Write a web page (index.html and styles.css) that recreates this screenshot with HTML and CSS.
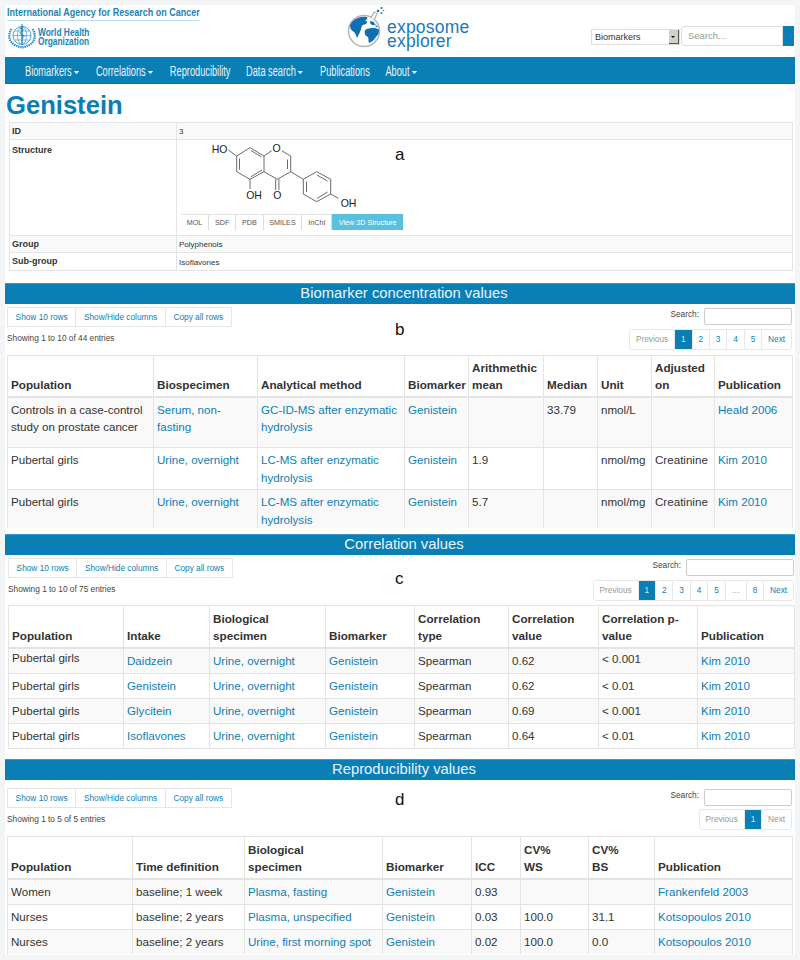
FILE: index.html
```html
<!DOCTYPE html>
<html lang="en">
<head>
<meta charset="utf-8">
<title>Genistein - Exposome Explorer</title>
<link rel="stylesheet" href="styles.css">
</head>
<body>
<div class="page">
  <header class="top">
    <div class="brand-left">
      <div class="iarc"><span>International Agency for Research on Cancer</span></div>
      <div class="who">
        <svg class="who-mark" viewBox="0 0 30 26" aria-hidden="true">
          <g fill="none" stroke="#2a8cc4">
            <circle cx="15" cy="12.5" r="9" stroke-width=".8"/>
            <ellipse cx="15" cy="12.5" rx="4.5" ry="9" stroke-width=".6"/>
            <path d="M6 12.5h18M7.5 8h15M7.5 17h15M15 3.5v18" stroke-width=".6"/>
            <path d="M15 1v20M13 6c3-1.500 4 .8 2 2s-3 2.500 0 3.500 2.500 2.500 0 3.500" stroke="#0f74ad" stroke-width="1"/>
            <path d="M4.500 6C1 11 1.500 18 7 21.500c3 2 6 2.500 8 3 2-.5 5-1 8-3 5.500-3.500 6-10.500 2.500-15.500" stroke-width="2.200" stroke-dasharray="1.500 .7"/>
          </g>
        </svg>
        <div class="who-name"><span>World Health<br>Organization</span></div>
      </div>
    </div>
    <div class="brand-mid">
      <svg class="globe" viewBox="0 0 40 42" aria-hidden="true">
        <circle cx="18" cy="25" r="15.500" fill="#fff" stroke="#b4b4b4" stroke-width="1.500"/>
        <path d="M25 12l3-6 3 1.500-2.500 6" fill="#fff" stroke="#b4b4b4" stroke-width="1.200"/>
        <path d="M8 14c4-3 9-4 13-3 1 2-1 3-2 4 2 0 3 1 1 3-2 1-3 0-4 2s-1 4-2 6-2 4-3 6c-1-2-1-4-3-6-2-1-4-3-4-6 0-2 2-4 4-6z" fill="#0f6fb0"/>
        <path d="M19 24c3-2 7-2 10-2 2 1 3 0 4 2 0 3-1 5-3 7-2 3-4 5-7 6-1-2 0-4-1-6-2-1-4-2-3-7z" fill="#0f6fb0"/>
        <path d="M24 15l4 1 1 3-3 0-2-2zM29 18l3 3-2 0z" fill="#0f6fb0"/>
        <circle cx="32" cy="5" r="1.300" fill="#1a7ab5"/><circle cx="35.500" cy="2" r="1.100" fill="#1a7ab5"/><circle cx="35.500" cy="7" r="1" fill="#1a7ab5"/><circle cx="37.500" cy="4.500" r=".8" fill="#1a7ab5"/>
      </svg>
      <div class="logo-word">exposome<br>explorer</div>
    </div>
    <div class="brand-right">
      <div class="select-box"><span>Biomarkers</span><i class="select-arrow"></i></div>
      <div class="search-box"><span>Search...</span></div>
      <div class="search-btn"></div>
    </div>
  </header>

  <nav class="nav">
    <div class="nav-inner">
      <a>Biomarkers<i class="caret"></i></a>
      <a>Correlations<i class="caret"></i></a>
      <a>Reproducibility</a>
      <a>Data search<i class="caret"></i></a>
      <a>Publications</a>
      <a>About<i class="caret"></i></a>
    </div>
  </nav>

  <h1 class="title">Genistein</h1>

  <section class="info-wrap">
    <span class="tag tag-a">a</span>
    <table class="info">
      <tr class="r-id"><th>ID</th><td>3</td></tr>
      <tr class="r-struct"><th>Structure</th><td>
        <svg class="molecule" viewBox="0 0 250 72" aria-hidden="true">
          <g fill="none" stroke="#444" stroke-width=".8">
            <path d="M80 7.700L66.700 16V31.700L80 39.300 94 31.700V16ZM69.500 18.500V29.500M81 36.700L92 30M81 10.500L91.500 17"/>
            <path d="M58.300 10L66.700 16M80 39.300V49M94 16L101.700 10.700M111.700 10.700L120.700 16V31.700L107.300 39.300 94 31.700M117.500 19.500V29M105.700 39.300V50M108.900 39.300V50"/>
            <path d="M120.700 31.700L133.300 39.300 146.700 31.700 160.700 39.300V54L146.700 61.700 133.300 54V39.300M136.500 41.500V52M147 35L157.500 41M147 58.500L157.500 52M160.700 54L168.300 58.300"/>
          </g>
          <g class="atoms">
            <text x="41.700" y="12.500">HO</text><text x="106.700" y="12" text-anchor="middle">O</text><text x="84" y="59" text-anchor="middle">OH</text><text x="107.300" y="59" text-anchor="middle">O</text><text x="170.700" y="66.500">OH</text>
          </g>
        </svg>
        <div class="tabs"><span>MOL</span><span>SDF</span><span>PDB</span><span>SMILES</span><span>InChI</span><span class="tab-on">View 3D Structure</span></div>
      </td></tr>
      <tr class="r-group"><th>Group</th><td>Polyphenols</td></tr>
      <tr class="r-sub"><th>Sub-group</th><td>Isoflavones</td></tr>
    </table>
  </section>

  <section class="sec sec-b">
    <h2 class="bar">Biomarker concentration values</h2>
    <span class="tag tag-b">b</span>
    <div class="tools">
      <div>
        <div class="btns"><a>Show 10 rows</a><a>Show/Hide columns</a><a>Copy all rows</a></div>
        <div class="count">Showing 1 to 10 of 44 entries</div>
      </div>
      <div class="tools-right">
        <div class="search"><label>Search:</label><span class="search-input"></span></div>
        <div class="pager"><a class="off">Previous</a><a class="on">1</a><a>2</a><a>3</a><a>4</a><a>5</a><a>Next</a></div>
      </div>
    </div>
    <div class="clip">
      <table class="data">
        <colgroup><col class="w146"><col class="w104"><col class="w147"><col class="w64"><col class="w75"><col class="w54"><col class="w54"><col class="w63"><col class="w78"></colgroup>
        <thead><tr class="h41"><th>Population</th><th>Biospecimen</th><th>Analytical method</th><th>Biomarker</th><th>Arithmethic mean</th><th>Median</th><th>Unit</th><th>Adjusted on</th><th>Publication</th></tr></thead>
        <tbody>
          <tr class="h51 odd"><td>Controls in a case-control study on prostate cancer</td><td><a>Serum, non-fasting</a></td><td><a>GC-ID-MS after enzymatic hydrolysis</a></td><td><a>Genistein</a></td><td></td><td>33.79</td><td>nmol/L</td><td></td><td><a>Heald 2006</a></td></tr>
          <tr class="h42"><td>Pubertal girls</td><td><a>Urine, overnight</a></td><td><a>LC-MS after enzymatic hydrolysis</a></td><td><a>Genistein</a></td><td>1.9</td><td></td><td>nmol/mg</td><td>Creatinine</td><td><a>Kim 2010</a></td></tr>
          <tr class="h42 odd"><td>Pubertal girls</td><td><a>Urine, overnight</a></td><td><a>LC-MS after enzymatic hydrolysis</a></td><td><a>Genistein</a></td><td>5.7</td><td></td><td>nmol/mg</td><td>Creatinine</td><td><a>Kim 2010</a></td></tr>
        </tbody>
      </table>
    </div>
  </section>

  <section class="sec sec-c">
    <h2 class="bar">Correlation values</h2>
    <span class="tag tag-c">c</span>
    <div class="tools">
      <div>
        <div class="btns"><a>Show 10 rows</a><a>Show/Hide columns</a><a>Copy all rows</a></div>
        <div class="count">Showing 1 to 10 of 75 entries</div>
      </div>
      <div class="tools-right">
        <div class="search"><label>Search:</label><span class="search-input"></span></div>
        <div class="pager"><a class="off">Previous</a><a class="on">1</a><a>2</a><a>3</a><a>4</a><a>5</a><a class="off">…</a><a>8</a><a>Next</a></div>
      </div>
    </div>
    <div class="clip">
      <table class="data">
        <colgroup><col class="w115"><col class="w86"><col class="w116"><col class="w89"><col class="w94"><col class="w90"><col class="w99"><col class="w97"></colgroup>
        <thead><tr class="h42"><th>Population</th><th>Intake</th><th>Biological specimen</th><th>Biomarker</th><th>Correlation type</th><th>Correlation value</th><th>Correlation p-value</th><th>Publication</th></tr></thead>
        <tbody>
          <tr class="h26 odd mid"><td class="raised">Pubertal girls</td><td><a>Daidzein</a></td><td><a>Urine, overnight</a></td><td><a>Genistein</a></td><td>Spearman</td><td>0.62</td><td class="raised-sm">&lt; 0.001</td><td><a>Kim 2010</a></td></tr>
          <tr class="h25 mid"><td>Pubertal girls</td><td><a>Genistein</a></td><td><a>Urine, overnight</a></td><td><a>Genistein</a></td><td>Spearman</td><td>0.62</td><td>&lt; 0.01</td><td><a>Kim 2010</a></td></tr>
          <tr class="h25 odd mid"><td>Pubertal girls</td><td><a>Glycitein</a></td><td><a>Urine, overnight</a></td><td><a>Genistein</a></td><td>Spearman</td><td>0.69</td><td>&lt; 0.001</td><td><a>Kim 2010</a></td></tr>
          <tr class="h25 mid"><td>Pubertal girls</td><td><a>Isoflavones</a></td><td><a>Urine, overnight</a></td><td><a>Genistein</a></td><td>Spearman</td><td>0.64</td><td>&lt; 0.01</td><td><a>Kim 2010</a></td></tr>
        </tbody>
      </table>
    </div>
  </section>

  <section class="sec sec-d">
    <h2 class="bar">Reproducibility values</h2>
    <span class="tag tag-d">d</span>
    <div class="tools">
      <div>
        <div class="btns"><a>Show 10 rows</a><a>Show/Hide columns</a><a>Copy all rows</a></div>
        <div class="count">Showing 1 to 5 of 5 entries</div>
      </div>
      <div class="tools-right">
        <div class="search"><label>Search:</label><span class="search-input"></span></div>
        <div class="pager"><a class="off">Previous</a><a class="on">1</a><a class="off">Next</a></div>
      </div>
    </div>
    <div class="clip">
      <table class="data">
        <colgroup><col class="w125"><col class="w112"><col class="w138"><col class="w89"><col class="w49"><col class="w68"><col class="w66"><col class="w138"></colgroup>
        <thead><tr class="h42"><th>Population</th><th>Time definition</th><th>Biological<br>specimen</th><th>Biomarker</th><th>ICC</th><th>CV%<br>WS</th><th>CV%<br>BS</th><th>Publication</th></tr></thead>
        <tbody>
          <tr class="h26 odd mid"><td>Women</td><td>baseline; 1 week</td><td><a>Plasma, fasting</a></td><td><a>Genistein</a></td><td>0.93</td><td></td><td></td><td><a>Frankenfeld 2003</a></td></tr>
          <tr class="h25 mid"><td>Nurses</td><td>baseline; 2 years</td><td><a>Plasma, unspecified</a></td><td><a>Genistein</a></td><td>0.03</td><td>100.0</td><td>31.1</td><td><a>Kotsopoulos 2010</a></td></tr>
          <tr class="h25 odd mid"><td>Nurses</td><td>baseline; 2 years</td><td><a>Urine, first morning spot</a></td><td><a>Genistein</a></td><td>0.02</td><td>100.0</td><td>0.0</td><td><a>Kotsopoulos 2010</a></td></tr>
        </tbody>
      </table>
    </div>
  </section>
</div>
</body>
</html>
```

FILE: styles.css
```css
* { box-sizing: border-box; }
html, body { margin: 0; height: 960px; overflow: hidden; background: #f4f5f7; }
body { padding: 5px; font-family: "Liberation Sans", Arial, sans-serif; color: #333; }
.page { width: 790px; height: 950px; background: #fff; overflow: hidden; position: relative; }

/* header */
.top { height: 52px; display: flex; justify-content: space-between; position: relative; }
.brand-left { width: 194px; padding: 0 0 0 2px; }
.iarc { font-weight: 700; font-size: 11.700px; color: #1a84b8; height: 16px; line-height: 13px; border-bottom: 1px solid #b9dff0; white-space: nowrap; width: 192px; }
.iarc span { display: inline-block; transform: scaleX(.77); transform-origin: 0 50%; }
.who { display: flex; align-items: center; margin-top: 2px; gap: 1px; }
.who-mark { width: 30px; height: 26px; }
.who-name { font-weight: 700; font-size: 11px; line-height: 9.500px; color: #1a84b8; padding-top: 2px; white-space: nowrap; }
.who-name span { display: inline-block; transform: scaleX(.76); transform-origin: 0 50%; }
.brand-mid { display: flex; position: absolute; left: 341px; top: 1px; }
.globe { width: 40px; height: 42px; }
.logo-word { font-size: 17.500px; line-height: 14px; color: #1a7ab5; margin: 14px 0 0 1px; letter-spacing: .2px; }
.brand-right { display: flex; align-items: flex-start; padding: 21px 1px 0 0; }
.select-box { width: 89px; height: 16px; margin: 3px 1px 0 0; border: 1px solid #ddd; display: flex; justify-content: space-between; font-size: 9px; line-height: 14px; padding-left: 3px; background: #fff; }
.select-arrow { width: 10px; height: 14px; background: #d4d0c8; border-right: 1px solid #555; border-bottom: 1px solid #555; position: relative; }
.select-arrow::after { content: ""; position: absolute; left: 2px; top: 6px; border: 2.500px solid transparent; border-top-color: #111; border-bottom: 0; }
.search-box { width: 102px; height: 20px; border: 1px solid #ddd; border-radius: 3px 0 0 3px; font-size: 9.500px; line-height: 18px; color: #999; padding-left: 6px; }
.search-btn { width: 11px; height: 20px; background: #0a7fb5; }

/* nav */
.nav { height: 27px; background: #0a7fb5; padding-left: 20px; border-bottom: 1px solid #0873a6; }
.nav-inner { display: flex; height: 26px; padding-top: 1px; align-items: center; transform: scaleX(.66); transform-origin: 0 50%; width: max-content; }
.nav a { font-size: 14px; color: #e8f4fa; margin-right: 23.600px; white-space: nowrap; display: flex; align-items: center; }
.caret { display: inline-block; margin: 4px 2px 0 3px; border: 4px solid transparent; border-top: 3px solid #fff; border-bottom: 0; }

/* title */
.title { margin: 0; height: 38px; padding: 7px 0 0 1px; font-size: 25.600px; line-height: 28px; font-weight: 700; color: #0a7fb5; }

/* info table */
.info-wrap { padding-left: 4px; position: relative; height: 161px; }
.info { width: 784px; border-collapse: collapse; table-layout: fixed; }
.info th, .info td { border: 1px solid #e4e4e4; vertical-align: top; text-align: left; }
.info th { width: 167px; font-size: 9px; font-weight: 700; padding: 3px 2px 2px; line-height: 11px; }
.info td { font-size: 8px; padding: 3px 2px 2px; line-height: 11px; }
.info .r-struct th { padding-top: 5px; }
.r-id { height: 17px; background: #f9f9f9; }
.r-struct { height: 96px; }
.info .r-struct td { padding: 0 0 0 4px; }
.r-group { height: 17px; background: #f9f9f9; }
.r-sub { height: 18px; }
.info .r-sub td { padding-top: 4px; padding-bottom: 1px; }
.molecule { display: block; width: 250px; height: 72px; margin: 0 0 2px -11px; }
.atoms text { font-size: 10.500px; fill: #222; font-family: "Liberation Sans", sans-serif; }
.tabs { display: flex; height: 16px; border-top: 1px solid #e4e4e4; width: max-content; font-size: 7.200px; line-height: 15px; color: #555; }
.tabs span { padding: 0 5.800px; border-right: 1px solid #ddd; flex: none; }
.tabs .tab-on { background: #5bc0de; color: #fff; border: 0; margin-top: -1px; height: 16px; line-height: 17px; padding: 0 6.500px; }

.tag { position: absolute; font-size: 17px; line-height: 20px; color: #111; left: 390px; }
.tag-a { top: 23px; }
.sec { position: relative; }
.tag-b { top: 37px; }
.tag-c { top: 35px; }
.tag-d { top: 31px; }

/* sections */
.bar { margin: 0; height: 21px; background: #0a7fb5; border-top: 1px solid #3c9ac8; color: #eaf5fb; font-size: 14.800px; font-weight: 400; line-height: 18px; text-align: center; padding-left: 8px; }
.sec-b { height: 245px; }
.sec-c { height: 225px; margin-top: 6px; }
.tools { display: flex; justify-content: space-between; padding: 3px 3px 0 2px; height: 51px; }
.sec-c .tools { padding: 3px 1px 0 3px; height: 50px; }
.sec-d .tools { padding: 8px 3px 0 2px; height: 56px; }
.btns { display: flex; height: 20px; border: 1px solid #e6e6e6; width: max-content; font-size: 8.300px; line-height: 18px; color: #0a7fb5; }
.btns a { padding: 0 7.600px; border-right: 1px solid #e6e6e6; white-space: nowrap; }
.btns a:last-child { border-right: 0; }
.count { font-size: 8.300px; line-height: 11px; margin-top: 6px; color: #444; }
.tools-right { display: flex; flex-direction: column; align-items: flex-end; }
.search { display: flex; align-items: flex-start; height: 22px; font-size: 8.300px; line-height: 15px; color: #444; }
.sec-d .search { height: 21px; }
.search label { margin-right: 5px; }
.search-input { width: 88px; height: 17px; border: 1px solid #ccc; border-radius: 2px; margin-top: 1px; }
.sec-c .search-input { width: 108px; }
.pager { display: flex; height: 21px; border: 1px solid #e8e8e8; border-radius: 3px; font-size: 8.300px; line-height: 19px; color: #0a7fb5; }
.pager a { padding: 0 5.900px; border-right: 1px solid #e8e8e8; }
.pager a:last-child { border-right: 0; }
.pager .off { color: #999; }
.pager .on { background: #0a7fb5; color: #cfe6f2; }
.clip { overflow: hidden; padding: 0 3px 0 2px; height: 173px; }
.sec-c .clip { padding: 0 1px 0 3px; height: 144px; }
.sec-d .clip { height: 118px; }
.data { border-collapse: collapse; table-layout: fixed; font-size: 11.600px; line-height: 17.500px; width: 100%; }
.data th, .data td { border: 1px solid #e4e4e4; padding: 3px; vertical-align: top; text-align: left; }
.data th { vertical-align: bottom; font-weight: 700; font-size: 11.700px; border-bottom-width: 2px; padding-top: 1px; padding-bottom: 2px; }
.data a { color: #0a7fb5; }
.data .mid td { vertical-align: middle; padding-top: 0; padding-bottom: 0; }
.data .mid td.raised { vertical-align: top; }
.data .mid td.raised-sm { padding-bottom: 4px; }
.odd { background: #f9f9f9; }
.h26 { height: 26px; } .h25 { height: 25px; } .h41 { height: 41px; } .h42 { height: 42px; } .h51 { height: 51px; }
.w146 { width: 146px; } .w104 { width: 104px; } .w147 { width: 147px; } .w64 { width: 64px; } .w75 { width: 75px; } .w54 { width: 54px; } .w63 { width: 63px; } .w78 { width: 78px; }
.w115 { width: 115px; } .w86 { width: 86px; } .w116 { width: 116px; } .w89 { width: 89px; } .w94 { width: 94px; } .w90 { width: 90px; } .w99 { width: 99px; } .w97 { width: 97px; }
.w125 { width: 125px; } .w112 { width: 112px; } .w138 { width: 138px; } .w49 { width: 49px; } .w68 { width: 68px; } .w66 { width: 66px; }
```
